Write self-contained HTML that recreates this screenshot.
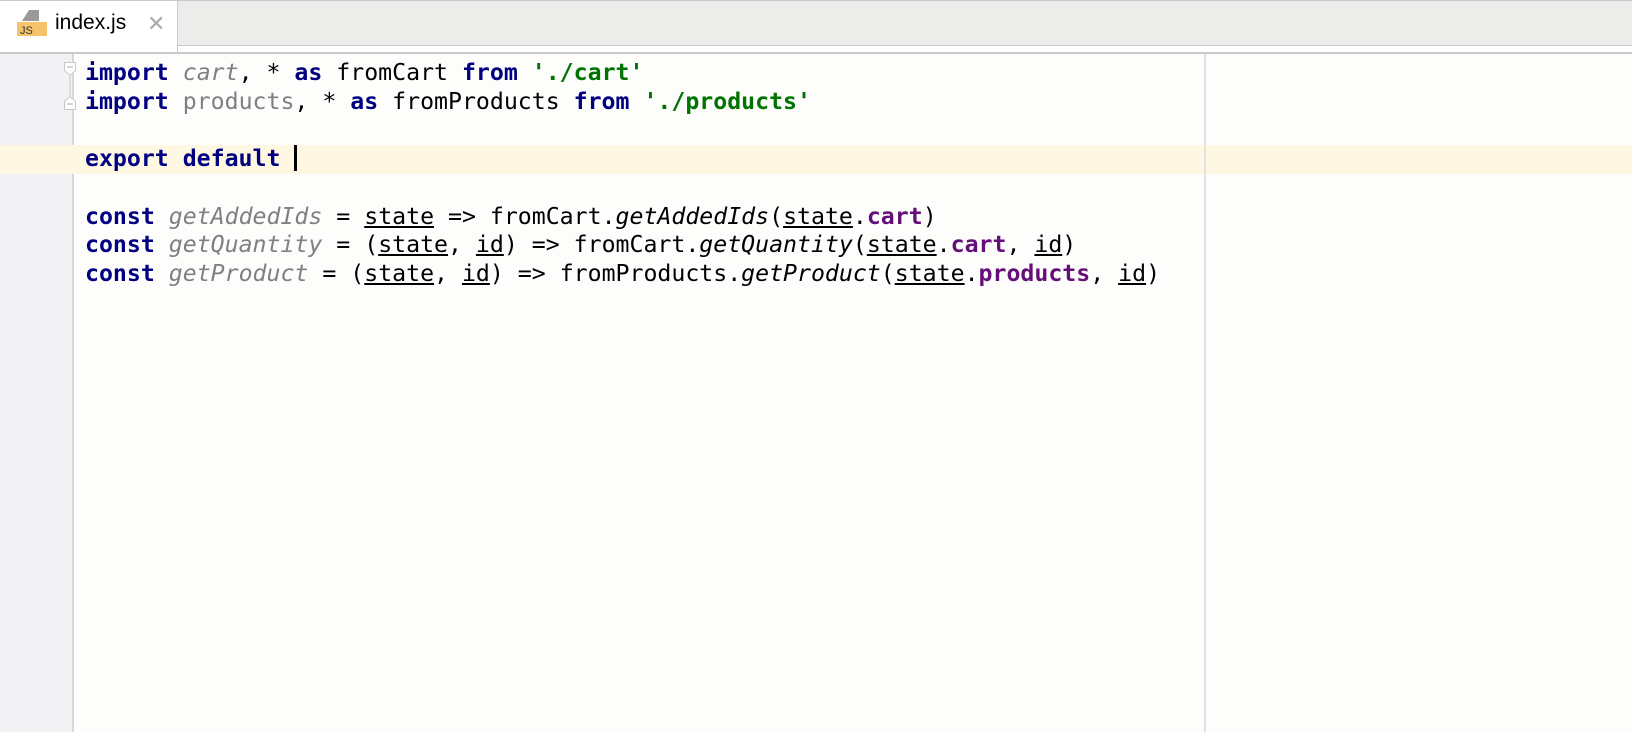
<!DOCTYPE html>
<html><head><meta charset="utf-8"><style>
html,body{margin:0;padding:0;width:1632px;height:732px;overflow:hidden;background:#fdfdfb;font-family:"DejaVu Sans Mono","Liberation Mono",monospace;}
.tabbar{position:absolute;left:0;top:0;width:1632px;height:46px;background:#ececeb;border-top:1px solid #c9c9c9;border-bottom:1px solid #c9c9c9;box-sizing:border-box;}
.strip{position:absolute;left:0;top:46px;width:1632px;height:6px;background:#fff;border-bottom:2px solid #c9c9c9;}
.tab{position:absolute;left:0;top:1px;width:178px;height:51px;background:#fff;border-right:1px solid #c9c9c9;box-sizing:border-box;}
.tabname{position:absolute;left:55px;top:10px;font-family:"Liberation Sans",sans-serif;font-size:21px;color:#000;}
.close{position:absolute;left:147px;top:10px;font-family:"Liberation Sans",sans-serif;font-size:22px;color:#aaa;}
.gutter{position:absolute;left:0;top:54px;width:72px;height:678px;background:#f2f2f4;border-right:2px solid #d8d8d8;}
.margin{position:absolute;left:1204px;top:54px;width:2px;height:678px;background:#e2e2e2;}
.hl{position:absolute;left:0;top:145px;width:1632px;height:29px;background:#fef8e3;}
.code{position:absolute;left:85px;top:59px;font-size:23.2px;line-height:28.7px;white-space:pre;color:#000;}
.k{color:#000080;font-weight:bold}.g{color:#808080}.i{font-style:italic}.s{color:#007400;font-weight:bold}.p{color:#660e7a;font-weight:bold}.u{text-decoration:underline}
.caret{display:inline-block;width:3px;height:26px;background:#000;vertical-align:-5px;}
</style></head><body>
<div class="tabbar"></div><div class="strip"></div>
<div class="tab">
<svg style="position:absolute;left:17px;top:9px" width="30" height="28"><polygon points="12,0 22,0 22,11 5,11" fill="#9a9a9a"/><rect x="0" y="12" width="30" height="14" fill="#f5c46a"/><text x="3" y="24" font-family="Liberation Sans" font-size="11" fill="#333">JS</text></svg>
<div class="tabname">index.js</div><div class="close">✕</div>
</div>
<div class="gutter"></div>
<div class="hl"></div>
<div class="margin"></div>
<svg style="position:absolute;left:63px;top:61px" width="14" height="50"><path d="M1.5,1.5h11v8l-5.5,5l-5.5,-5z" fill="#fff" stroke="#c8c8c8"/><line x1="4" y1="6" x2="10" y2="6" stroke="#aaa"/><path d="M1.5,48.5h11v-8l-5.5,-5l-5.5,5z" fill="#fff" stroke="#c8c8c8"/><line x1="4" y1="43" x2="10" y2="43" stroke="#aaa"/><line x1="7" y1="15" x2="7" y2="35" stroke="#c8c8c8"/></svg>
<div class="code"><span class="k">import</span> <span class="g i">cart</span>, * <span class="k">as</span> fromCart <span class="k">from</span> <span class="s">'./cart'</span>
<span class="k">import</span> <span class="g">products</span>, * <span class="k">as</span> fromProducts <span class="k">from</span> <span class="s">'./products'</span>

<span class="k">export default</span> <span class="caret"></span>

<span class="k">const</span> <span class="g i">getAddedIds</span> = <span class="u">state</span> =&gt; fromCart.<span class="i">getAddedIds</span>(<span class="u">state</span>.<span class="p">cart</span>)
<span class="k">const</span> <span class="g i">getQuantity</span> = (<span class="u">state</span>, <span class="u">id</span>) =&gt; fromCart.<span class="i">getQuantity</span>(<span class="u">state</span>.<span class="p">cart</span>, <span class="u">id</span>)
<span class="k">const</span> <span class="g i">getProduct</span> = (<span class="u">state</span>, <span class="u">id</span>) =&gt; fromProducts.<span class="i">getProduct</span>(<span class="u">state</span>.<span class="p">products</span>, <span class="u">id</span>)</div>
</body></html>
